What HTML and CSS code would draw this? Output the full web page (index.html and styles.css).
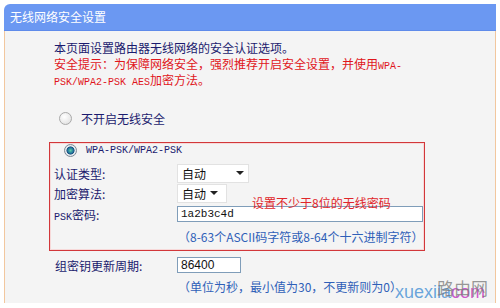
FILE: index.html
```html
<!DOCTYPE html>
<html lang="zh-CN">
<head>
<meta charset="utf-8">
<title>无线网络安全设置</title>
<link rel="stylesheet" href="styles.css">
</head>
<body>
<div class="panel">
  <div class="header">无线网络安全设置</div>
  <div class="body">
    <div class="intro">
      <p class="desc">本页面设置路由器无线网络的安全认证选项。</p>
      <p class="warn">安全提示：为保障网络安全，强烈推荐开启安全设置，并使用<span class="en">WPA-</span><br><span class="en">PSK/WPA2-PSK AES</span>加密方法。</p>
    </div>
    <div class="opt opt-off"><span class="radio"></span><span>不开启无线安全</span></div>
    <div class="wpa-box">
      <div class="opt opt-wpa"><span class="radio checked"></span><span class="en">WPA-PSK/WPA2-PSK</span></div>
      <div class="row r1"><span class="label">认证类型:</span><div class="select s1"><span>自动</span><i class="caret"></i></div></div>
      <div class="row r2"><span class="label">加密算法:</span><div class="select s2"><span>自动</span><i class="caret"></i></div></div>
      <div class="row r3"><span class="label"><span class="en">PSK</span>密码:</span><div class="input psk"><span class="en-in">1a2b3c4d</span></div></div>
      <div class="hint hint-in">（8-63个ASCII码字符或8-64个十六进制字符）</div>
      <span class="note">设置不少于8位的无线密码</span>
    </div>
    <div class="row gk"><span class="label">组密钥更新周期:</span><div class="input gkin">86400</div></div>
    <div class="hint hint-out">（单位为秒，最小值为30，不更新则为0）</div>
    <span class="wm-en">xuexila<span class="wm-com">com</span></span>
    <span class="wm-cn">路由网</span>
  </div>
</div>
</body>
</html>
```

FILE: styles.css
```css
html, body {
  margin: 0;
  padding: 0;
  background: #ffffff;
}
body {
  font-family: "Noto Sans CJK SC", "Liberation Sans", sans-serif;
  font-size: 12px;
  color: #1a1a5a;
}
.panel {
  width: 492px;
  margin: 4px 0 0 4px;
}
.header {
  height: 26px;
  line-height: 26px;
  background: #6b98f2;
  border-bottom: 1px solid #5f8bea;
  border-radius: 6px 0 0 0;
  color: #ffffff;
  padding-left: 6px;
  font-size: 12px;
}
.body {
  position: relative;
  height: 272px;
  background: #f4f4f4;
  border-left: 1px solid #f2c79e;
  border-right: 1px solid #f2c79e;
  padding: 9px 0 0 44px;
  box-sizing: border-box;
  overflow: hidden;
}
.intro {
  margin-left: 5px;
}
.intro p {
  margin: 0;
  height: 16px;
  line-height: 16px;
}
.intro .warn {
  height: 32px;
}
.desc {
  color: #1b1b6e;
}
.warn {
  color: #e0161b;
}
.en {
  font-family: "Liberation Mono", monospace;
  font-size: 10px;
  line-height: 10px;
}
.opt {
  display: flex;
  align-items: center;
  gap: 9px;
  padding-left: 10px;
  height: 16px;
  color: #1b1b6e;
}
.opt-off {
  margin-top: 22px;
}
.opt-wpa {
  height: 15px;
}
.radio {
  width: 11px;
  height: 11px;
  border-radius: 50%;
  border: 1px solid #a9a9a9;
  background: radial-gradient(circle at 40% 35%, #ffffff 0%, #e6e6e6 70%, #cfcfcf 100%);
  flex: none;
}
.radio.checked {
  border-color: #7e8a96;
  background: radial-gradient(circle, #5fd0a8 0%, #1f6f9a 38%, #1c4a7a 48%, #e8eef2 56%, #d0d6dc 100%);
}
.wpa-box {
  position: relative;
  margin-top: 16px;
  width: 376px;
  box-sizing: border-box;
  border: 1px solid #d2373a;
  box-shadow: inset 0 0 0 1px #f7d9d9;
  padding: 0 0 5px 4px;
}
.row {
  display: flex;
  align-items: center;
  color: #1b1b6e;
}
.label {
  width: 123px;
  flex: none;
}
.r1 {
  margin-top: 5px;
  height: 20px;
}
.r2 {
  margin-top: 0;
  height: 20px;
}
.r3 {
  margin-top: 2px;
  height: 18px;
}
.select {
  display: flex;
  align-items: center;
  box-sizing: border-box;
  height: 19px;
  background: #ffffff;
  border: 1px solid #e2e2e2;
  padding-left: 4px;
  color: #111111;
}
.s1 {
  width: 72px;
  padding-right: 4px;
}
.s2 {
  width: 50px;
  padding-right: 8px;
}
.caret {
  margin-left: auto;
  width: 0;
  height: 0;
  border-left: 4px solid transparent;
  border-right: 4px solid transparent;
  border-top: 4px solid #222222;
}
.input {
  box-sizing: border-box;
  height: 16px;
  background: #ffffff;
  border: 1px solid #7f9db9;
  display: flex;
  align-items: center;
  padding-left: 3px;
  color: #111111;
}
.psk {
  width: 246px;
}
.en-in {
  font-family: "Liberation Mono", monospace;
  font-size: 11px;
}
.gkin {
  width: 64px;
  font-family: "Liberation Sans", sans-serif;
  font-size: 12px;
}
.hint {
  color: #2f5fb8;
  line-height: 16px;
  height: 16px;
}
.hint-in {
  margin-top: 6px;
  padding-left: 124px;
}
.note {
  position: absolute;
  left: 202px;
  top: 52px;
  line-height: 16px;
  color: #e0262a;
}
.gk {
  margin-top: 5px;
  height: 18px;
  margin-left: 6px;
}
.gk .label {
  width: 122px;
}
.hint-out {
  margin-top: 5px;
  padding-left: 129px;
}
.wm-en {
  position: absolute;
  left: 390px;
  top: 252px;
  font-family: "Liberation Sans", sans-serif;
  font-size: 18px;
  line-height: 1;
  color: rgba(80, 150, 215, 0.85);
}
.wm-com {
  color: rgba(200, 60, 200, 0.85);
}
.wm-cn {
  position: absolute;
  left: 432px;
  top: 248px;
  font-size: 17px;
  line-height: 1;
  color: rgba(120, 120, 120, 0.75);
}
```
